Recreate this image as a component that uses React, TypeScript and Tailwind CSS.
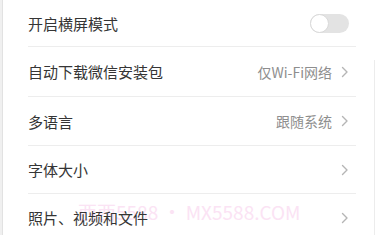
import React from 'react';

const font = { fontFamily: '"Noto Sans CJK SC", "Noto Sans", sans-serif' };

const rows = [
  { name: '开启横屏模式', toggle: true, h: 'h-[47px]' },
  { name: '自动下载微信安装包', value: '仅Wi-Fi网络', h: 'h-[50px]' },
  { name: '多语言', value: '跟随系统', h: 'h-[49px]' },
  { name: '字体大小', value: '', h: 'h-[48px]' },
  { name: '照片、视频和文件', value: '', h: 'h-[47px]' },
];

function Chevron() {
  return (
    <svg className="w-[8px] h-[12px] ml-[9px]" viewBox="0 0 8 12" fill="none" stroke="#b5b5b5" strokeWidth={1.4}>
      <path d="M1.5 1.5L6 6l-4.5 4.5" strokeLinecap="round" strokeLinejoin="round" />
    </svg>
  );
}

export default function App() {
  return (
    <div className="relative w-[376px] h-[235px] overflow-hidden bg-white flex" style={font}>
      {/* watermark, sits under the rows */}
      <div className="absolute left-[78px] top-[202px] text-[19px] leading-none text-[#fbe3f4] pointer-events-none whitespace-nowrap">
        西西5588 • MX5588.COM
      </div>
      {/* left edge strip */}
      <div className="w-[3px] bg-[#f0f0f0] border-r border-[#e2e2e2]" />
      <div className="relative flex-1 flex flex-col">
        {rows.map((row, i) => (
          <div key={row.name} className={`${row.h} shrink-0 flex flex-col`}>
            <div className="flex-1 flex items-center pl-[25px] pr-[27px]">
              <span className="text-[15px] text-[#353535] leading-none">{row.name}</span>
              <div className="ml-auto flex items-center">
                {row.toggle ? (
                  <div className="w-[39px] h-[19px] rounded-full bg-[#e3e3e3] flex items-center">
                    <div className="w-[19px] h-[19px] rounded-full bg-white border border-[#d9d9d9]" />
                  </div>
                ) : (
                  <>
                    {row.value && <span className="text-[14px] text-[#8e8e8e] leading-none">{row.value}</span>}
                    <Chevron />
                  </>
                )}
              </div>
            </div>
            {i < rows.length - 1 && <div className="ml-[25px] mr-[20px] h-px bg-[#ededed]" />}
          </div>
        ))}
      </div>
      {/* right edge line */}
      <div className="absolute right-[1px] top-[60px] bottom-0 w-px bg-[#ececec]" />
    </div>
  );
}
